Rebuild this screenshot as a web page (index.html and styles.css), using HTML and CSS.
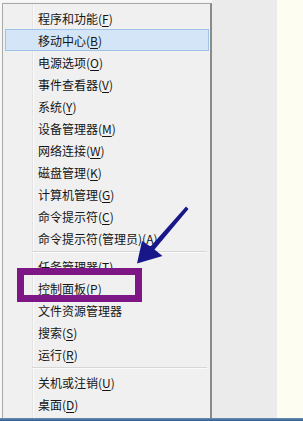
FILE: index.html
```html
<!DOCTYPE html>
<html lang="zh-CN">
<head>
<meta charset="utf-8">
<link rel="stylesheet" href="styles.css">
</head>
<body>
<div class="screen">
  <div class="desk">
    <div class="menu">
      <div class="item">程序和功能(<u>F</u>)</div>
      <div class="item active">移动中心(<u>B</u>)</div>
      <div class="item">电源选项(<u>O</u>)</div>
      <div class="item">事件查看器(<u>V</u>)</div>
      <div class="item">系统(<u>Y</u>)</div>
      <div class="item">设备管理器(<u>M</u>)</div>
      <div class="item">网络连接(<u>W</u>)</div>
      <div class="item">磁盘管理(<u>K</u>)</div>
      <div class="item">计算机管理(<u>G</u>)</div>
      <div class="item">命令提示符(<u>C</u>)</div>
      <div class="item">命令提示符(管理员)(<u>A</u>)</div>
      <div class="sep"></div>
      <div class="item">任务管理器(<u>T</u>)</div>
      <div class="item">控制面板(<u>P</u>)</div>
      <div class="item">文件资源管理器</div>
      <div class="item">搜索(<u>S</u>)</div>
      <div class="item">运行(<u>R</u>)</div>
      <div class="sep"></div>
      <div class="item">关机或注销(<u>U</u>)</div>
      <div class="item">桌面(<u>D</u>)</div>
    </div>
    <div class="wall"></div>
    <div class="cream"></div>
  </div>
  <div class="taskbar-edge"></div>
  <div class="mark"></div>
  <svg class="arrow" width="65" height="70" viewBox="0 0 65 70">
    <polygon points="56,6.5 58.5,9 24.5,49.5 32.5,56 7,63.5 12,41 20.5,46.5" fill="#17178a"/>
  </svg>
</div>
</body>
</html>
```
FILE: styles.css
```css
* { box-sizing: border-box; }
html, body { margin: 0; padding: 0; }
body {
  width: 303px;
  height: 421px;
  overflow: hidden;
  background: #f7f7f7;
  font-family: "Noto Sans CJK SC", "Microsoft YaHei", sans-serif;
}
.screen {
  position: relative;
  width: 303px;
  height: 421px;
  display: flex;
  flex-direction: column;
}
.desk {
  flex: 1;
  display: flex;
  align-items: stretch;
}
.menu {
  width: 210px;
  margin: 3px 0 0 2px;
  background: #f0f0f0 linear-gradient(to right, transparent 29px, #e3e3e3 29px, #e3e3e3 30px, #fbfbfb 30px, #fbfbfb 31px, transparent 31px);
  border-top: 1px solid #a9a9a9;
  border-left: 1px solid #a9a9a9;
  border-right: 2px solid #8a8a8a;
  padding-top: 3px;
  box-shadow: 1px 0 1px rgba(0,0,0,0.15);
}
.item {
  height: 22px;
  line-height: 22px;
  margin: 0 1px 0 2px;
  padding-left: 32px;
  font-size: 12px;
  color: #151515;
  white-space: nowrap;
  border: 1px solid transparent;
}
.item u { text-decoration: underline; text-underline-offset: 2px; }
.item.active {
  background: #d3e5f6;
  border-color: #9fc3e6;
}
.sep {
  height: 6px;
  margin-left: 29px;
  margin-right: 3px;
  display: flex;
  flex-direction: column;
  justify-content: center;
}
.sep::before {
  content: "";
  display: block;
  height: 1px;
  background: #d6d6d6;
  border-bottom: 1px solid #fbfbfb;
  box-sizing: content-box;
}
.wall {
  width: 65px;
  background: #ebebeb;
}
.cream {
  flex: 1;
  background: #fdfdf2;
}
.taskbar-edge {
  height: 3px;
  background: linear-gradient(#6d8fb5, #2e5b8f);
}
.mark {
  position: absolute;
  left: 17px;
  top: 268px;
  width: 125px;
  height: 34px;
  border: 7px solid #7d1785;
}
.arrow {
  position: absolute;
  left: 130px;
  top: 200px;
}
```
